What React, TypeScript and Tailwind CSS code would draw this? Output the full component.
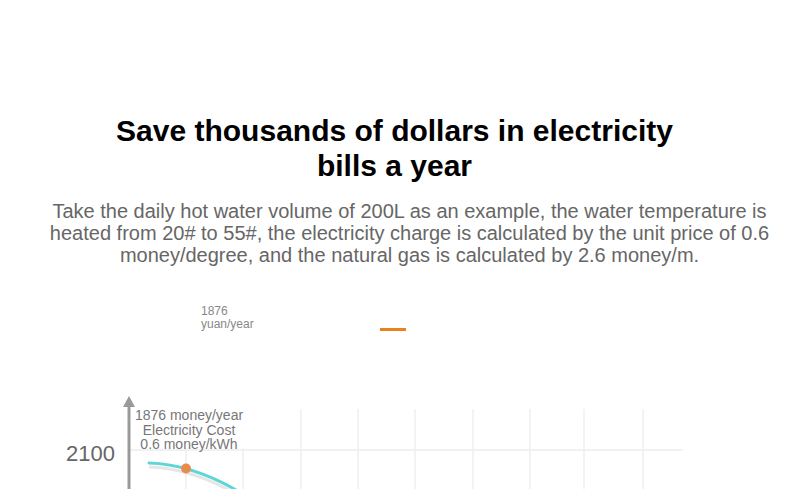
const gridX = [186, 243, 301, 358, 415, 473, 530, 584, 643];

function CostChart() {
  return (
    <div className="relative h-[94px] w-full overflow-hidden">
      <svg width="789" height="94" className="block">
        <line x1="128" y1="54" x2="683" y2="54" stroke="#ececec" strokeWidth="1.5" />
        {gridX.map((x) => (
          <line key={x} x1={x} y1="13" x2={x} y2="94" stroke="#efefef" strokeWidth="1.5" />
        ))}
        <rect x="133" y="8" width="112" height="44" fill="#fff" />
        <line x1="129" y1="9" x2="129" y2="94" stroke="#9a9a9a" strokeWidth="3" />
        <polygon points="129,0 123,11 135,11" fill="#9a9a9a" />
        <path d="M149 71 C170 71.5 198 76 236 98" fill="none" stroke="#e6e6e6" strokeWidth="3" />
        <path d="M149 67 C170 67.5 198 72 238 95" fill="none" stroke="#5fd6d6" strokeWidth="3" strokeLinecap="round" />
        <circle cx="186" cy="72.5" r="5" fill="#ea8a4b" />
      </svg>
      <span className="absolute left-[66px] top-[47px] text-[22px] leading-none text-[#666]">2100</span>
      <div className="absolute left-[133px] top-[12px] w-[112px] text-center text-[14px] leading-[14.5px] text-[#777]">
        <div>1876 money/year</div>
        <div>Electricity Cost</div>
        <div>0.6 money/kWh</div>
      </div>
    </div>
  );
}

export default function App() {
  return (
    <div className="min-h-[489px] w-full bg-white font-['Liberation_Sans',Arial,sans-serif]">
      <div className="pt-[113px]">
        <h1 className="mx-auto max-w-[600px] text-center text-[30px] font-bold leading-[35px] text-black">
          Save thousands of dollars in electricity bills a year
        </h1>
        <p className="mt-[17px] pl-[30px] text-center text-[20px] leading-[22px] text-[#666]">
          Take the daily hot water volume of 200L as an example, the water temperature is heated from 20# to 55#, the
          electricity charge is calculated by the unit price of 0.6 money/degree, and the natural gas is calculated by 2.6
          money/m.
        </p>
      </div>
      <div className="mt-[39px] flex items-start pl-[201px]">
        <div className="text-[12px] leading-[13px] text-[#888]">
          <div>1876</div>
          <div>yuan/year</div>
        </div>
        <div className="ml-[126px] mt-[23px] h-[3px] w-[26px] bg-[#e8821e]" />
      </div>
      <div className="mt-[65px]">
        <CostChart />
      </div>
    </div>
  );
}
